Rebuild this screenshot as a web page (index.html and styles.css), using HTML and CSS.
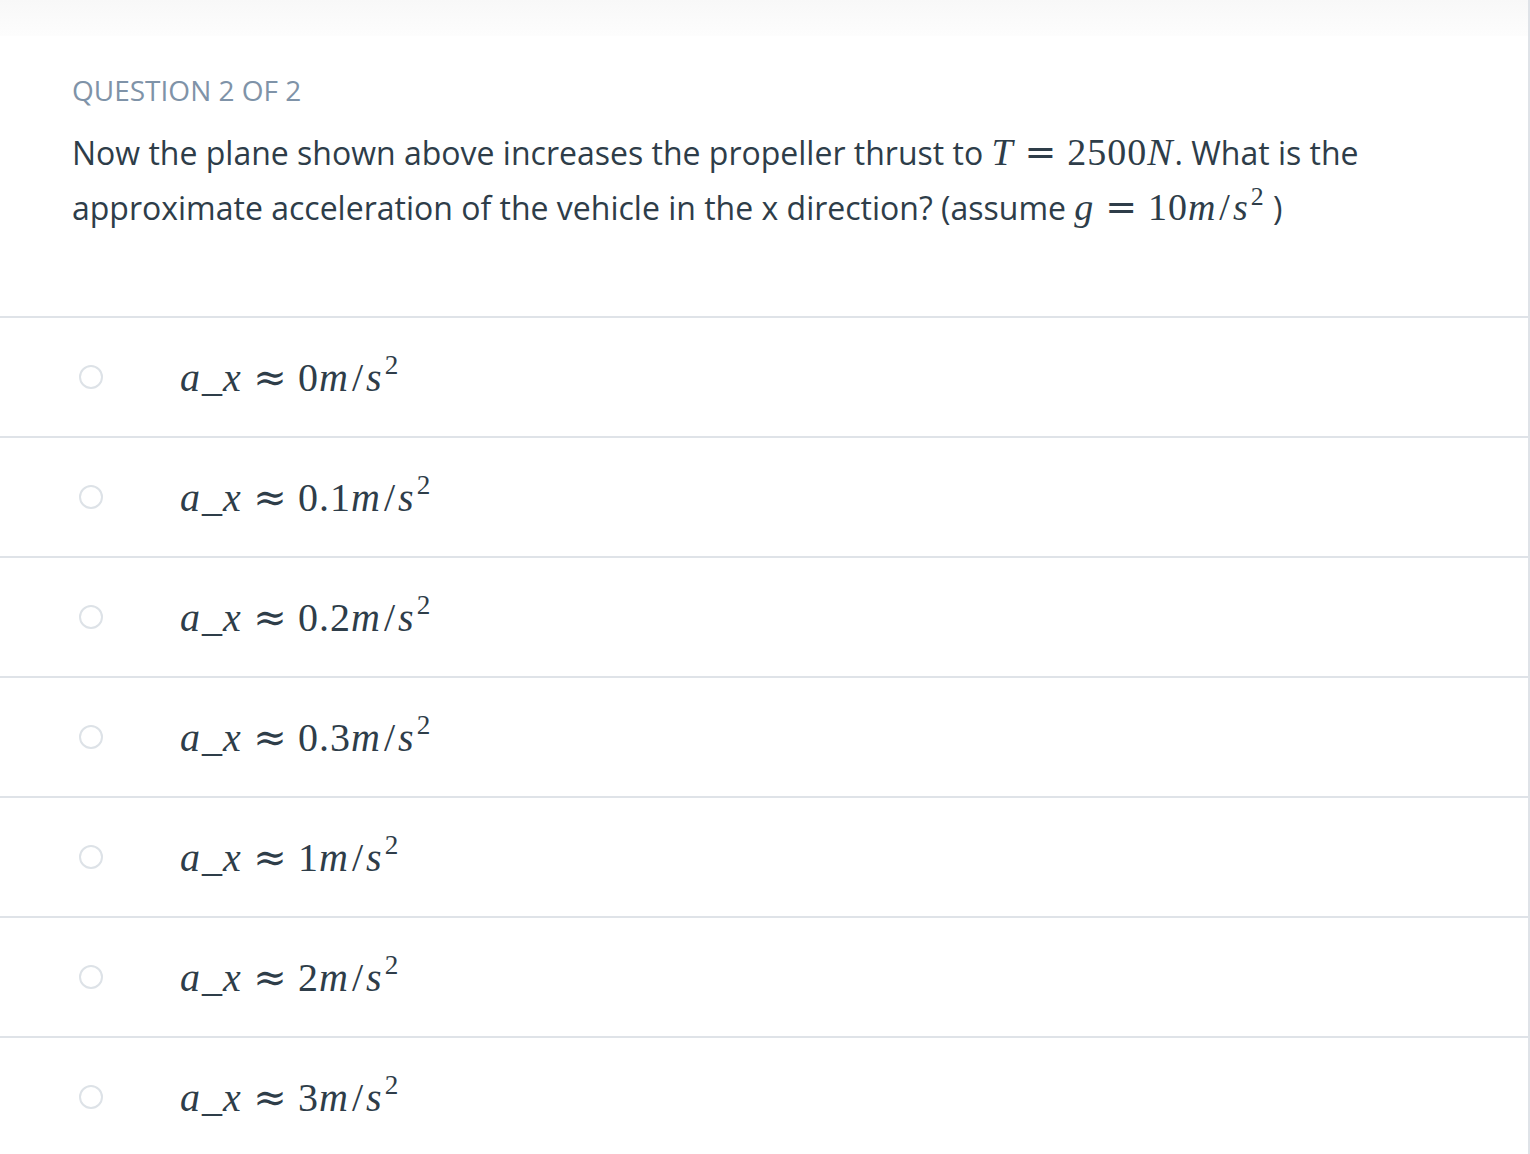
FILE: index.html
```html
<!DOCTYPE html>
<html>
<head>
<meta charset="utf-8">
<link rel="stylesheet" href="styles.css">
</head>
<body>
<div class="page">
  <div class="topfade"></div>
  <section class="question">
    <div class="label">QUESTION 2 OF 2</div>
    <p class="prompt">Now the plane shown above increases the propeller thrust to <span class="math"><i>T</i><span class="rel">=</span>2500<i>N</i></span>. What is the approximate acceleration of the vehicle in the x direction? (assume <span class="math"><i>g</i><span class="rel">=</span>10<i>m</i><span class="sl">/</span><i>s</i><sup>2</sup></span> )</p>
  </section>
  <ul class="options">
    <li class="option"><span class="radio"></span><span class="math"><i>a</i>_<i>x</i><span class="rel">≈</span>0<i>m</i><span class="sl">/</span><i>s</i><sup>2</sup></span></li>
    <li class="option"><span class="radio"></span><span class="math"><i>a</i>_<i>x</i><span class="rel">≈</span>0.1<i>m</i><span class="sl">/</span><i>s</i><sup>2</sup></span></li>
    <li class="option"><span class="radio"></span><span class="math"><i>a</i>_<i>x</i><span class="rel">≈</span>0.2<i>m</i><span class="sl">/</span><i>s</i><sup>2</sup></span></li>
    <li class="option"><span class="radio"></span><span class="math"><i>a</i>_<i>x</i><span class="rel">≈</span>0.3<i>m</i><span class="sl">/</span><i>s</i><sup>2</sup></span></li>
    <li class="option"><span class="radio"></span><span class="math"><i>a</i>_<i>x</i><span class="rel">≈</span>1<i>m</i><span class="sl">/</span><i>s</i><sup>2</sup></span></li>
    <li class="option"><span class="radio"></span><span class="math"><i>a</i>_<i>x</i><span class="rel">≈</span>2<i>m</i><span class="sl">/</span><i>s</i><sup>2</sup></span></li>
    <li class="option"><span class="radio"></span><span class="math"><i>a</i>_<i>x</i><span class="rel">≈</span>3<i>m</i><span class="sl">/</span><i>s</i><sup>2</sup></span></li>
  </ul>
</div>
</body>
</html>
```
FILE: styles.css
```css
html, body {
  margin: 0;
  padding: 0;
  background: #ffffff;
}
body {
  font-family: "Open Sans", "Liberation Sans", sans-serif;
  color: #2e3d49;
}
.page {
  width: 1528px;
  min-height: 1154px;
  border-right: 2px solid #dfe3e8;
  box-sizing: content-box;
}
.topfade {
  height: 36px;
  background: linear-gradient(#f8f8f8, #fdfdfd);
}
.question {
  padding: 36px 72px 0 72px;
  height: 244px;
}
.label {
  font-size: 28px;
  line-height: 36px;
  color: #7f93a8;
}
.prompt {
  margin: 17px 0 0 0;
  font-size: 32px;
  line-height: 54px;
}
.math {
  font-family: "Liberation Serif", "DejaVu Serif", serif;
  font-size: 38px;
  letter-spacing: 1px;
  white-space: nowrap;
}
.math i {
  font-style: italic;
  padding-right: 1px;
}
.rel {
  font-family: "DejaVu Serif", serif;
  font-size: 1em;
  margin: 0 0.26em;
}
.sl {
  margin: 0 2px;
}
.math sup {
  font-size: 0.68em;
  line-height: 0;
  vertical-align: 0.6em;
  margin-left: 1px;
}
.options {
  list-style: none;
  margin: 0;
  padding: 0;
}
.option {
  display: flex;
  align-items: center;
  height: 118px;
  border-top: 2px solid #dfe3e8;
  padding-left: 79px;
  font-size: 30px;
}
.radio {
  width: 20px;
  height: 20px;
  border: 2px solid #dde2e7;
  border-radius: 50%;
  margin-right: 77px;
  flex: none;
}
.option .math {
  font-size: 40px;
}
```
